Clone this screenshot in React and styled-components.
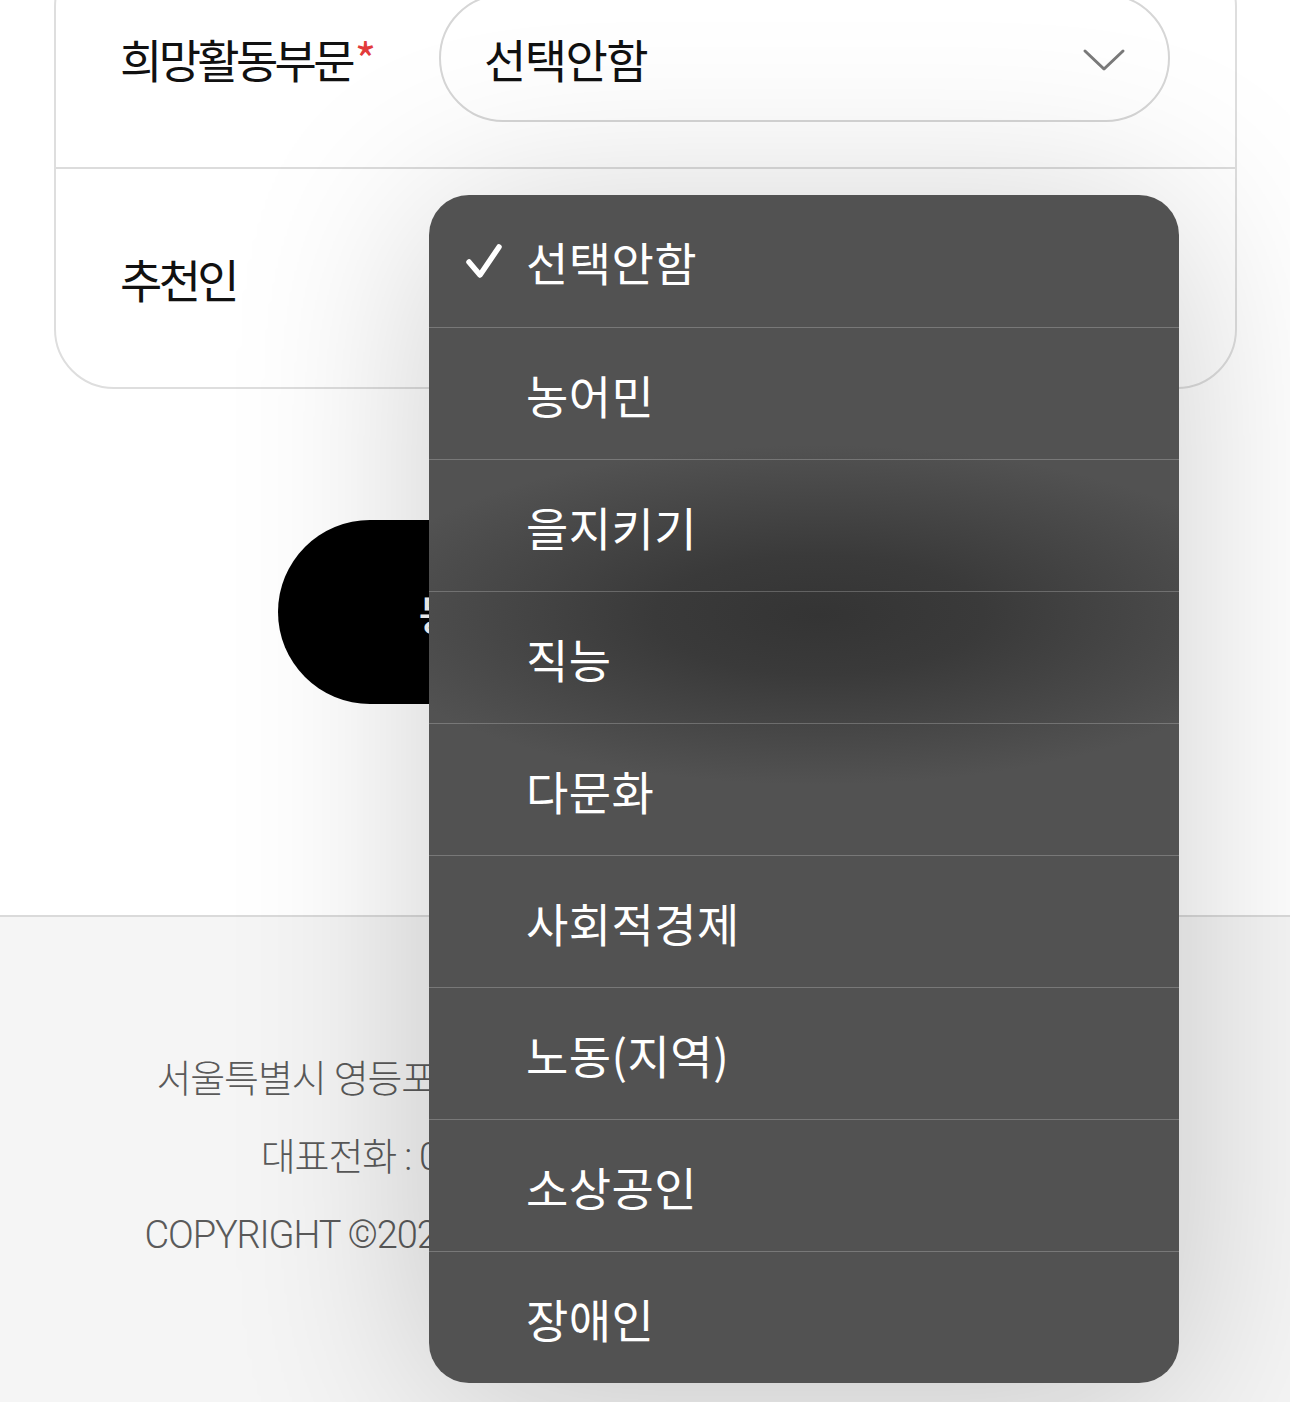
import React from "react";
import styled, { createGlobalStyle } from "styled-components";

const GlobalStyle = createGlobalStyle`
  html, body {
    margin: 0;
    padding: 0;
    background: #ffffff;
  }
  body {
    font-family: "Noto Sans CJK KR", "Noto Sans", sans-serif;
  }
`;

const Page = styled.div`
  position: relative;
  width: 1290px;
  height: 1402px;
  overflow: hidden;
  background: #ffffff;
`;

const FormWrap = styled.div`
  padding: 0 53px 0 54px;
  margin-top: -53px;
`;

const Card = styled.div`
  border: 2px solid #dedede;
  border-radius: 60px;
`;

const Row = styled.div`
  display: grid;
  grid-template-columns: 319px 731px;
  align-items: center;
  padding: 45px 0 45px 64px;
  border-bottom: ${(p) => (p.$last ? "none" : "2px solid #dcdcdc")};
`;

const Label = styled.span`
  font-size: 46px;
  font-weight: 400;
  letter-spacing: -0.08em;
  color: #111111;
`;

const Required = styled.span`
  color: #e23b3b;
  margin-left: 3px;
`;

const SelectBox = styled.div`
  box-sizing: border-box;
  height: 128px;
  border: 2px solid #d6d6d6;
  border-radius: 64px;
  display: flex;
  align-items: center;
  justify-content: space-between;
  padding: 4px 42px 0 43px;
  font-size: 46px;
  letter-spacing: -0.035em;
  color: #111111;

  span {
    margin-top: -4px;
  }
`;

const Input = styled.div`
  box-sizing: border-box;
  height: 128px;
  border: 2px solid #d6d6d6;
  border-radius: 64px;
`;

const ButtonWrap = styled.div`
  display: flex;
  justify-content: center;
  padding: 131px 0 211px;
`;

const SubmitButton = styled.button`
  width: 734px;
  height: 184px;
  border: none;
  border-radius: 92px;
  background: #000000;
  color: #ffffff;
  font-family: "Noto Sans CJK KR", sans-serif;
  font-size: 42px;
  font-weight: 500;
  letter-spacing: -0.05em;
`;

const Footer = styled.footer`
  border-top: 2px solid #dadada;
  background: #f5f5f5;
  padding: 123px 0 260px;
  text-align: center;
`;

const FooterLine = styled.p`
  margin: 0;
  font-family: Roboto, "Noto Sans CJK KR", sans-serif;
  font-size: 38px;
  font-weight: 300;
  line-height: 78px;
  letter-spacing: -0.03em;
  color: #5a5a5a;
  white-space: nowrap;
`;

/* native picker sheet; the dark smudge is the blurred black button behind it */
const Menu = styled.div`
  position: absolute;
  left: 429px;
  top: 195px;
  width: 750px;
  border-radius: 40px;
  overflow: hidden;
  background:
    radial-gradient(ellipse 470px 170px at 390px 420px, #343434 0%, #3a3a3a 35%, rgba(82, 82, 82, 0) 100%),
    #525252;
  box-shadow: 0 20px 200px rgba(0, 0, 0, 0.2);
`;

const MenuItem = styled.div`
  display: flex;
  align-items: center;
  height: 132px;
  box-sizing: border-box;
  padding-left: 36px;
  border-top: ${(p) => (p.$first ? "none" : "1px solid rgba(255,255,255,0.22)")};
  color: #ffffff;
  font-size: 46px;
  letter-spacing: 0.01em;
`;

const CheckSlot = styled.span`
  width: 61px;
  display: flex;
  align-items: center;
`;

const Chevron = () => (
  <svg width="44" height="26" viewBox="0 0 44 26" fill="none">
    <path d="M3 4 L22 22 L41 4" stroke="#7a7a7a" strokeWidth="3" strokeLinecap="round" strokeLinejoin="round" />
  </svg>
);

const Check = () => (
  <svg width="38" height="36" viewBox="0 0 38 36" fill="none">
    <path d="M4 19 L15 32 L34 4" stroke="#ffffff" strokeWidth="5.5" strokeLinecap="round" strokeLinejoin="round" />
  </svg>
);

const options = ["선택안함", "농어민", "을지키기", "직능", "다문화", "사회적경제", "노동(지역)", "소상공인", "장애인"];

const App = () => {
  return (
    <Page>
      <GlobalStyle />
      <FormWrap>
        <Card>
          <Row>
            <Label>
              희망활동부문<Required>*</Required>
            </Label>
            <SelectBox>
              <span>선택안함</span>
              <Chevron />
            </SelectBox>
          </Row>
          <Row $last>
            <Label>추천인</Label>
            <Input />
          </Row>
        </Card>
      </FormWrap>

      <ButtonWrap>
        <SubmitButton>동의하고 당원가입 신청하기</SubmitButton>
      </ButtonWrap>

      <Footer>
        <FooterLine>서울특별시 영등포구 국회대로68길 14 (여의도동) 3층 (우 07236)</FooterLine>
        <FooterLine>대표전화 : 02-784-0000 | 팩스 : 02-784-0001 (평일)</FooterLine>
        <FooterLine>COPYRIGHT ©2024 KOREA PARTY CO. ALL RIGHTS RESERVED.</FooterLine>
      </Footer>

      <Menu>
        {options.map((opt, i) => (
          <MenuItem key={opt} $first={i === 0}>
            <CheckSlot>{i === 0 && <Check />}</CheckSlot>
            {opt}
          </MenuItem>
        ))}
      </Menu>
    </Page>
  );
};

export default App;
